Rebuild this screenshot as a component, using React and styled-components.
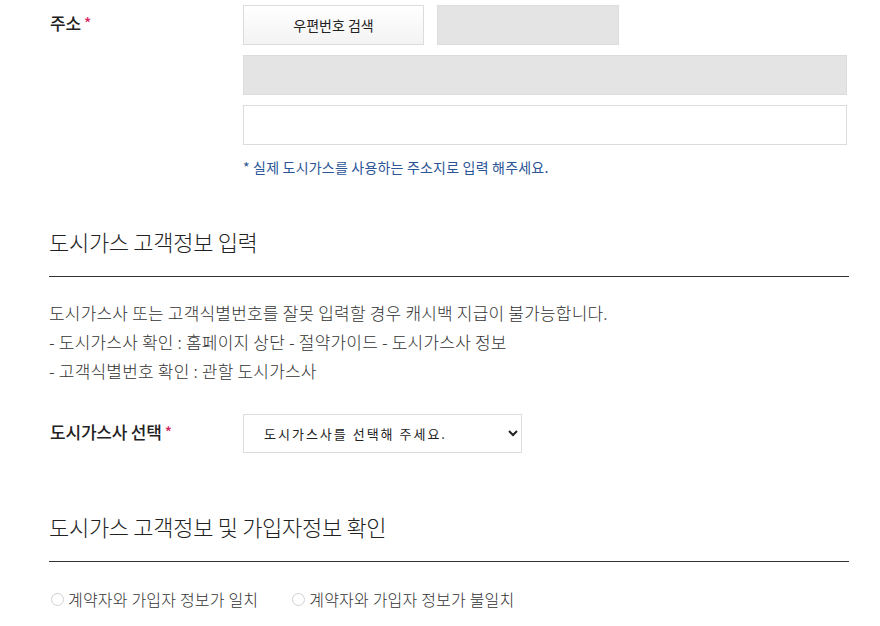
import React from 'react';
import styled, { createGlobalStyle } from 'styled-components';

const GlobalStyle = createGlobalStyle`
  html, body {
    margin: 0;
    padding: 0;
    background: #fff;
  }
  body {
    font-family: "Noto Sans CJK KR", "Noto Sans", sans-serif;
    color: #333;
  }
`;

const Page = styled.div`
  width: 800px;
  padding: 5px 0 0 49px;
`;

const FormRow = styled.div`
  display: flex;
  align-items: flex-start;
  margin-top: ${(props) => props.$top || 0}px;
`;

const Label = styled.div`
  width: 194px;
  flex-shrink: 0;
  height: 40px;
  display: flex;
  align-items: center;
  padding: 0 0 5px 1px;
  box-sizing: border-box;
  font-size: 17px;
  font-weight: 500;
  color: #222;
  letter-spacing: -0.2px;
`;

const Required = styled.span`
  color: #d6255b;
  margin-left: 3px;
  font-size: 15px;
`;

const Fields = styled.div`
  width: 604px;
  display: flex;
  flex-direction: column;
  gap: 10px;
`;

const InlineFields = styled.div`
  display: flex;
  gap: 13px;
`;

const SearchButton = styled.button`
  width: 181px;
  height: 40px;
  border: 1px solid #dcdcdc;
  background: linear-gradient(#fff, #f3f3f3);
  font-family: inherit;
  font-size: 14px;
  color: #222;
  cursor: pointer;
`;

const TextInput = styled.input`
  width: ${(props) => props.$width || '100%'};
  height: 40px;
  box-sizing: border-box;
  border: 1px solid #dcdcdc;
  background: ${(props) => (props.readOnly ? '#e4e4e4' : '#fff')};
  font-family: inherit;
  font-size: 14px;
  padding: 0 12px;
  outline: none;
`;

const Note = styled.p`
  margin: 2px 0 0;
  font-size: 14px;
  color: #2b5597;
  letter-spacing: 0.2px;
`;

const SectionTitle = styled.h3`
  margin: ${(props) => props.$top}px 0 0;
  padding-bottom: 20px;
  border-bottom: 1px solid #333;
  font-size: 22px;
  font-weight: 300;
  line-height: 30px;
  color: #222;
  letter-spacing: -0.3px;
`;

const Guide = styled.div`
  margin-top: 21px;
  font-size: 17px;
  font-weight: 300;
  line-height: 29px;
  color: #333;
  letter-spacing: 0.2px;
`;

const Select = styled.select`
  width: 279px;
  height: 39px;
  border: 1px solid #dcdcdc;
  background: #fff;
  font-family: "Noto Sans CJK KR", sans-serif;
  font-size: 13px;
  color: #222;
  padding: 0 10px 0 16px;
  letter-spacing: 2px;
  outline: none;
`;

const RadioGroup = styled.div`
  display: flex;
  gap: 32px;
  margin-top: 25px;
`;

const RadioLabel = styled.label`
  display: flex;
  align-items: center;
  gap: 4px;
  font-size: 16px;
  font-weight: 300;
  color: #333;
  letter-spacing: 0.2px;
  cursor: pointer;
`;

const Radio = styled.input`
  appearance: none;
  margin: 0 0 0 2px;
  width: 13px;
  height: 13px;
  border: 1px solid #d0d0d0;
  border-radius: 50%;
  background: #fff;
`;

export default function App() {
  return (
    <Page>
      <GlobalStyle />
      <FormRow>
        <Label>
          주소<Required>*</Required>
        </Label>
        <Fields>
          <InlineFields>
            <SearchButton type="button">우편번호 검색</SearchButton>
            <TextInput readOnly $width="182px" />
          </InlineFields>
          <TextInput readOnly />
          <TextInput />
          <Note>* 실제 도시가스를 사용하는 주소지로 입력 해주세요.</Note>
        </Fields>
      </FormRow>

      <SectionTitle $top={49}>도시가스 고객정보 입력</SectionTitle>
      <Guide>
        <div>도시가스사 또는 고객식별번호를 잘못 입력할 경우 캐시백 지급이 불가능합니다.</div>
        <div>- 도시가스사 확인 : 홈페이지 상단 - 절약가이드 - 도시가스사 정보</div>
        <div>- 고객식별번호 확인 : 관할 도시가스사</div>
      </Guide>

      <FormRow $top={29}>
        <Label>
          도시가스사 선택<Required>*</Required>
        </Label>
        <Select defaultValue="">
          <option value="">도시가스사를 선택해 주세요.</option>
        </Select>
      </FormRow>

      <SectionTitle $top={57}>도시가스 고객정보 및 가입자정보 확인</SectionTitle>
      <RadioGroup>
        <RadioLabel>
          <Radio type="radio" name="match" />
          계약자와 가입자 정보가 일치
        </RadioLabel>
        <RadioLabel>
          <Radio type="radio" name="match" />
          계약자와 가입자 정보가 불일치
        </RadioLabel>
      </RadioGroup>
    </Page>
  );
}
